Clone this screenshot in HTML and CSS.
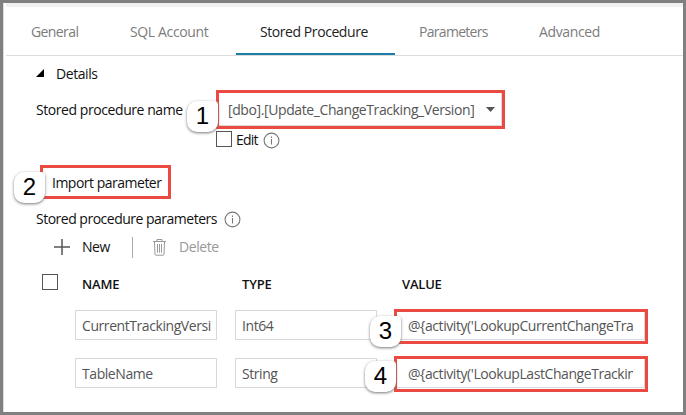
FILE: index.html
```html
<!DOCTYPE html>
<html lang="en">
<head>
<meta charset="utf-8">
<title>Stored Procedure</title>
<link rel="stylesheet" href="styles.css">
</head>
<body>
<main class="frame">
  <div class="strip"></div>
  <nav class="tabs">
    <div class="tab tab-general"><span class="t-general">General</span></div>
    <div class="tab tab-sql"><span class="t-sql">SQL Account</span></div>
    <div class="tab tab-sp active"><span class="t-sp">Stored Procedure</span></div>
    <div class="tab tab-par"><span class="t-par">Parameters</span></div>
    <div class="tab tab-adv"><span class="t-adv">Advanced</span></div>
  </nav>
  <div class="details">
    <svg width="9" height="9" viewBox="0 0 9 9"><path d="M8 0V8H0Z"/></svg>
    <span class="t-details">Details</span>
  </div>
  <div class="field">
    <label class="t-spname">Stored procedure name</label>
    <div class="marked select">
      <div class="select-inner"><span class="t-dbo">[dbo].[Update_ChangeTracking_Version]</span>
        <svg width="9" height="5" viewBox="0 0 9 5"><path fill="#555" d="M0 0H9L4.5 5Z"/></svg>
      </div>
      <span class="badge b1">1</span>
    </div>
  </div>
  <div class="edit">
    <span class="check"></span><span class="t-edit">Edit</span>
    <svg class="info" width="17" height="17" viewBox="0 0 17 17"><circle cx="8.5" cy="8.5" r="7.4"/><path d="M8.5 7V12.4M8.5 4.4V5.9"/></svg>
  </div>
  <div class="marked import"><span class="t-import">Import parameter</span><span class="badge b2">2</span></div>
  <div class="params">
    <span class="t-params">Stored procedure parameters</span>
    <svg class="info" width="17" height="17" viewBox="0 0 17 17"><circle cx="8.5" cy="8.5" r="7.4"/><path d="M8.5 7V12.4M8.5 4.4V5.9"/></svg>
  </div>
  <div class="toolbar">
    <svg width="16" height="16" viewBox="0 0 16 16"><path d="M0 8H16M8 0V16" stroke="#555" stroke-width="1.5"/></svg>
    <span class="t-new">New</span>
    <span class="sep"></span>
    <svg class="trash" width="13" height="17" viewBox="0 0 13 17"><path d="M0 2.5H13M4 2.5V.5H9V2.5M1.5 3L2 15.5Q2 16.2 2.8 16.2H10.2Q11 16.2 11 15.5L11.5 3M4.5 5V13.7M6.5 5V13.7M8.5 5V13.7"/></svg>
    <span class="t-delete">Delete</span>
  </div>
  <div class="row head">
    <span class="check"></span>
    <span class="h-name"><b>NAME</b></span><span class="h-type"><b>TYPE</b></span><span><b>VALUE</b></span>
  </div>
  <div class="row line1">
    <div class="input"><span class="clip">CurrentTrackingVersi</span></div>
    <div class="input type"><span class="clip">Int64</span></div>
    <div class="marked value"><div class="value-inner"><span class="clip t-v1">@{activity('LookupCurrentChangeTra</span></div><span class="badge b3">3</span></div>
  </div>
  <div class="row line2">
    <div class="input"><span class="clip">TableName</span></div>
    <div class="input type"><span class="clip">String</span></div>
    <div class="marked value"><div class="value-inner"><span class="clip t-v2">@{activity('LookupLastChangeTrackin</span></div><span class="badge b4">4</span></div>
  </div>
</main>
</body>
</html>
```
FILE: styles.css
```css
* { box-sizing: border-box; }
body { margin: 0; font: 14px/20px "Open Sans", "Noto Sans", sans-serif; letter-spacing: -.43px; color: #111; }
svg { display: block; flex: none; }
.frame { width: 686px; height: 415px; border: 3px solid #808080; background: #fff; box-shadow: inset 1px 0 #ddd; overflow: hidden; }
.strip { height: 4px; margin-left: 3px; background: #f1f1f1; }
.tabs { display: flex; height: 49px; margin-left: 3px; border-bottom: 1px solid #dcdcdc; color: #7c7c7c; }
.tab { height: 48px; padding: 15px 0 0 24px; white-space: nowrap; }
.tab-general { width: 100px; padding-left: 25px; }
.tab-sql { width: 130px; }
.tab-sp { width: 159px; }
.tab-par { width: 120px; }
.active { color: #222; border-bottom: 2px solid #1c7ea6; }
.t-general { letter-spacing: -.6px; }
.t-par { letter-spacing: -.7px; }
.t-sql, .t-adv { letter-spacing: -.36px; }
.details { display: flex; align-items: center; gap: 11px; height: 20px; margin: 8px 0 0 33px; }
.details svg { margin-top: -1px; }
.field { display: flex; align-items: center; height: 39px; margin: 6px 0 0 33px; }
.field label { width: 180px; white-space: nowrap; }
.t-dbo { letter-spacing: -.4px; }
.marked { position: relative; border: 3px solid #ea4a42; background: #fff; white-space: nowrap; }
.select { width: 289px; height: 39px; }
.select-inner { display: flex; align-items: center; justify-content: space-between; width: 283px; height: 33px; padding: 2px 6px 0 9px; border: solid #d8d8d8; border-width: 0 1px 1px 0; color: #555; }
.select-inner svg { margin-top: -2px; }
.badge { position: absolute; width: 31px; height: 31px; border-radius: 10px 4px 10px 10px; background: #fff; box-shadow: 0 1px 3px #777; color: #000; text-align: center; letter-spacing: 0; font: 24px/29px "Liberation Sans", sans-serif; }
.b1 { left: -32px; top: 8px; }
.b2 { left: -29px; top: 4px; }
.b3 { left: -27px; top: 4px; }
.b4 { left: -32px; top: 2px; }
.edit { display: flex; align-items: center; height: 19px; margin: 1px 0 0 213px; }
.check { width: 16px; height: 16px; border: 1px solid #555; flex: none; }
.edit .check { margin: -1px 4px 0 0; }
.edit .info { margin-top: 2px; }
.t-edit { width: 27px; letter-spacing: -.8px; }
.info { fill: none; stroke: #777; stroke-width: 1.1; }
.import { width: 131px; height: 34px; margin: 16px 0 0 37px; padding: 5px 0 0 9px; }
.t-import { letter-spacing: -.5px; }
.params { display: flex; align-items: center; height: 20px; margin: 10px 0 0 33px; }
.t-params { width: 188px; white-space: nowrap; letter-spacing: -.5px; }
.toolbar { display: flex; align-items: center; height: 22px; margin: 7px 0 0 51px; }
.t-new { width: 50px; margin-left: 12px; }
.sep { width: 1px; height: 21px; margin-right: 20px; background: #aaa; }
.trash { fill: none; stroke: #999; stroke-width: 1; }
.t-delete { margin-left: 13px; color: #999; }
.row { display: flex; }
.head { align-items: center; height: 20px; margin: 14px 0 0 39px; font-size: 13px; letter-spacing: -.2px; }
.head .check { margin: 0 24px 0 0; }
.h-name, .h-type { width: 160px; }
.head b { position: relative; top: 2px; font-weight: 600; }
.line1 { height: 35px; margin: 17px 0 0 72px; }
.line2 { height: 36px; margin: 12px 0 0 72px; }
.input { width: 142px; height: 30px; margin: 1px 18px 0 0; padding: 5px 3px 0 6px; border: 1px solid #d8d8d8; color: #555; }
.line2 .input { margin-top: 2px; }
.type { margin-right: 17px; }
.clip { display: block; overflow: hidden; white-space: nowrap; }
.value { width: 254px; }
.value-inner { width: 248px; height: 28px; padding: 4px 8px 0 11px; border: solid #d8d8d8; border-width: 0 1px 1px 0; color: #555; }
.line2 .value-inner { height: 29px; padding-top: 5px; }
.t-v2 { width: 225px; }
```
